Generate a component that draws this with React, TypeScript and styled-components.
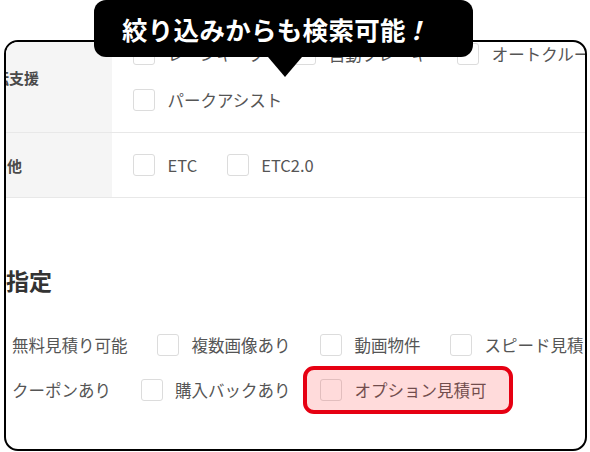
import React from "react";
import styled, { createGlobalStyle } from "styled-components";

const GlobalStyle = createGlobalStyle`
  html, body {
    margin: 0;
    padding: 0;
    background: #fff;
  }
  body {
    font-family: "Noto Sans CJK JP", "Noto Sans", sans-serif;
    -webkit-font-smoothing: antialiased;
  }
`;

const Page = styled.div`
  position: relative;
  width: 590px;
  height: 452px;
  overflow: hidden;
`;

const Balloon = styled.div`
  position: absolute;
  top: 0;
  left: 94px;
  z-index: 2;
  box-sizing: border-box;
  width: 379px;
  height: 57px;
  padding-left: 28px;
  display: flex;
  align-items: center;
  border-radius: 12px;
  background: #000;
  color: #fff;
  font-size: 25.5px;
  font-weight: 700;
  letter-spacing: 0.3px;
  white-space: nowrap;

  &::after {
    content: "";
    position: absolute;
    top: 100%;
    left: 174px;
    border-left: 17px solid transparent;
    border-right: 17px solid transparent;
    border-top: 20px solid #000;
  }
`;

const Slant = styled.span`
  display: inline-block;
  transform: skewX(-14deg);
`;

const Frame = styled.div`
  box-sizing: border-box;
  height: 411px;
  margin: 40px 3px 0 4px;
  border: 2.5px solid #000;
  border-radius: 14px;
  overflow: hidden;
`;

const Table = styled.div`
  margin: -20px 0 0 -29px;
  display: grid;
  grid-template-columns: 135px 1fr;
`;

const LabelCell = styled.div<{ $shift?: number }>`
  display: flex;
  align-items: center;
  padding-left: ${({ $shift }) => $shift ?? 0}px;
  background: #f5f5f5;
  border-bottom: 1px solid #e8e8e8;
  font-size: 15px;
  font-weight: 700;
  color: #4a4a4a;
  white-space: nowrap;
`;

const ValueCell = styled.div`
  display: flex;
  flex-direction: column;
  gap: 24px;
  padding: 21px 0 21px 21px;
  border-bottom: 1px solid #e8e8e8;
  overflow: hidden;
`;

const Line = styled.div`
  display: flex;
  align-items: center;
  gap: 29.5px;
  white-space: nowrap;
`;

const Item = styled.label<{ $marked?: boolean }>`
  position: relative;
  display: flex;
  align-items: center;
  gap: 12.5px;
  height: 22px;
  font-size: 16.5px;
  color: #555;
  white-space: nowrap;

  ${({ $marked }) =>
    $marked &&
    `
    &::after {
      content: "";
      position: absolute;
      top: -13px;
      right: -26px;
      bottom: -13px;
      left: -17px;
      border: 4px solid #e60012;
      border-radius: 11px;
      background: rgba(255, 40, 40, 0.17);
    }
  `}
`;

const Box = styled.span`
  box-sizing: border-box;
  flex: none;
  width: 22px;
  height: 22px;
  border: 1.5px solid #dcdcdc;
  border-radius: 3px;
  background: #fff;
`;

const Heading = styled.h2`
  margin: 69px 0 0;
  font-size: 23px;
  line-height: 1.2;
  font-weight: 700;
  color: #333;
`;

const Options = styled.div`
  margin: 39px 0 0 -28.5px;
  display: flex;
  flex-direction: column;
  gap: 23px;
`;

type Row = { label: string; shift: number; lines: string[][] };

const rows: Row[] = [
  {
    label: "運転支援",
    shift: 2,
    lines: [["レーンキープ", "自動ブレーキ", "オートクルーズ"], ["パークアシスト"]],
  },
  { label: "その他", shift: 0, lines: [["ETC", "ETC2.0"]] },
];

const options: string[][] = [
  ["無料見積り可能", "複数画像あり", "動画物件", "スピード見積り"],
  ["クーポンあり", "購入バックあり", "オプション見積可"],
];

function Check({ text, marked }: { text: string; marked?: boolean }) {
  return (
    <Item $marked={marked}>
      <Box />
      {text}
    </Item>
  );
}

export default function App() {
  return (
    <>
      <GlobalStyle />
      <Page>
        <Balloon>
          絞り込みからも検索可能<Slant>！</Slant>
        </Balloon>
        <Frame>
          <Table>
            {rows.map((row) => (
              <React.Fragment key={row.label}>
                <LabelCell $shift={row.shift}>{row.label}</LabelCell>
                <ValueCell>
                  {row.lines.map((line, i) => (
                    <Line key={i}>
                      {line.map((t) => (
                        <Check key={t} text={t} />
                      ))}
                    </Line>
                  ))}
                </ValueCell>
              </React.Fragment>
            ))}
          </Table>

          <Heading>指定</Heading>
          <Options>
            {options.map((line, i) => (
              <Line key={i}>
                {line.map((t) => (
                  <Check key={t} text={t} marked={t === "オプション見積可"} />
                ))}
              </Line>
            ))}
          </Options>
        </Frame>
      </Page>
    </>
  );
}
